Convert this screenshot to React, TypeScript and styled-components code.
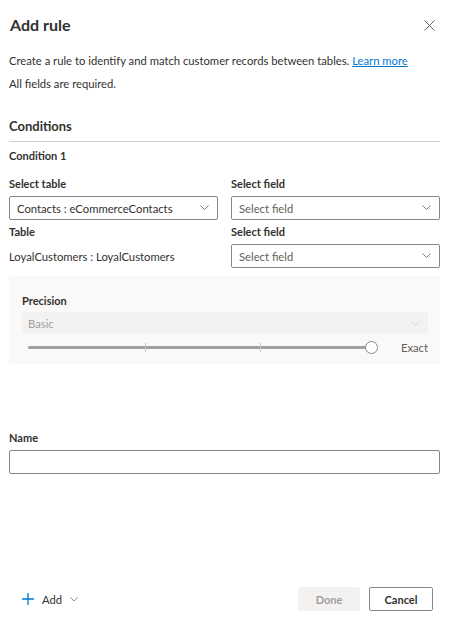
import React from "react";
import styled, { createGlobalStyle } from "styled-components";

const GlobalStyle = createGlobalStyle`
  html, body {
    margin: 0;
    padding: 0;
    background: #fff;
  }
  body {
    font-family: "Lato", "Open Sans", "Liberation Sans", sans-serif;
    color: #323130;
  }
`;

const Panel = styled.div`
  width: 450px;
  height: 622px;
  display: flex;
  flex-direction: column;
  box-sizing: border-box;
  padding: 0 10px 11px 9px;
`;

const Header = styled.div`
  display: flex;
  justify-content: space-between;
  align-items: center;
  height: 24px;
  margin-top: 13px;
`;

const Title = styled.h1`
  margin: 0 0 0 1px;
  font-size: 16px;
  font-weight: 700;
  line-height: 24px;
`;

const CloseButton = styled.button`
  border: none;
  background: none;
  padding: 0;
  margin-right: 5px;
  width: 12px;
  height: 12px;
  display: flex;
  align-items: center;
  justify-content: center;
`;

const Text = styled.p<{ $top: number }>`
  margin: ${(p) => p.$top}px 0 0 0;
  font-size: 11.25px;
  line-height: 16px;
`;

const Link = styled.a`
  color: #0078d4;
  text-decoration: underline;
`;

const SectionTitle = styled.h2`
  margin: 25px 0 0 0;
  font-size: 13px;
  font-weight: 700;
  line-height: 18px;
`;

const Divider = styled.hr`
  margin: 6px 0 0 0;
  border: none;
  border-top: 1px solid #d2d0ce;
`;

const SubTitle = styled.h3`
  margin: 6px 0 0 0;
  font-size: 11px;
  font-weight: 700;
  line-height: 16px;
`;

const FieldGrid = styled.div`
  display: grid;
  grid-template-columns: 1fr 1fr;
  column-gap: 13px;
  margin-top: 12px;
`;

const Field = styled.div<{ $top?: number }>`
  display: flex;
  flex-direction: column;
  gap: 4px;
  margin-top: ${(p) => p.$top ?? 0}px;
`;

const Label = styled.label`
  font-size: 11px;
  font-weight: 700;
  line-height: 16px;
`;

const Select = styled.div<{ $placeholder?: boolean; $disabled?: boolean }>`
  height: 24px;
  box-sizing: border-box;
  display: flex;
  align-items: center;
  justify-content: space-between;
  padding: 0 8px 0 7px;
  border: ${(p) => (p.$disabled ? "none" : "1px solid #8a8886")};
  border-radius: 2px;
  background: ${(p) => (p.$disabled ? "#f3f2f1" : "#fff")};
  font-size: 11.25px;
  color: ${(p) => (p.$disabled ? "#a19f9d" : p.$placeholder ? "#605e5c" : "#323130")};
  padding-left: ${(p) => (p.$disabled ? 6 : 7)}px;
`;

const StaticValue = styled.div`
  height: 24px;
  display: flex;
  align-items: center;
  font-size: 11.25px;
`;

const PrecisionBox = styled.div`
  margin-top: 8px;
  background: #faf9f8;
  padding: 17px 12px 6px 13px;
  height: 88px;
  box-sizing: border-box;
  display: flex;
  flex-direction: column;
  gap: 3px;
`;

const SliderRow = styled.div`
  display: flex;
  align-items: center;
  height: 22px;
  gap: 29px;
  padding-left: 6px;
`;

const Track = styled.div`
  position: relative;
  flex: 1;
  height: 3px;
  background: #a19f9d;
  border-radius: 2px;
`;

const Tick = styled.span`
  position: absolute;
  top: -3px;
  width: 1px;
  height: 9px;
  background: #c8c6c4;
`;

const Thumb = styled.span`
  position: absolute;
  right: -6px;
  top: -5px;
  width: 11px;
  height: 11px;
  border-radius: 50%;
  border: 1px solid #8a8886;
  background: #fff;
`;

const SliderValue = styled.span`
  font-size: 11.25px;
  color: #605e5c;
`;

const NameField = styled(Field)`
  margin-top: 66px;
`;

const Input = styled.input`
  height: 24px;
  box-sizing: border-box;
  border: 1px solid #8a8886;
  border-radius: 2px;
  font-family: inherit;
  font-size: 11px;
  padding: 0 7px;
`;

const Footer = styled.div`
  margin-top: auto;
  display: flex;
  align-items: center;
  justify-content: space-between;
  padding-left: 13px;
  padding-right: 7px;
`;

const AddButton = styled.button`
  border: none;
  background: none;
  padding: 0;
  display: flex;
  align-items: center;
  gap: 8px;
  font-family: inherit;
  font-size: 11.25px;
  color: #323130;
`;

const Actions = styled.div`
  display: flex;
  gap: 9px;
`;

const Button = styled.button<{ $disabled?: boolean }>`
  height: 24px;
  box-sizing: border-box;
  border-radius: 2px;
  font-family: inherit;
  font-size: 11px;
  font-weight: 700;
  border: ${(p) => (p.$disabled ? "none" : "1px solid #8a8886")};
  background: ${(p) => (p.$disabled ? "#f3f2f1" : "#fff")};
  color: ${(p) => (p.$disabled ? "#a19f9d" : "#323130")};
  width: ${(p) => (p.$disabled ? 62 : 64)}px;
`;

const Chevron = ({ color = "#605e5c", size = 9 }: { color?: string; size?: number }) => (
  <svg width={size} height={size * 0.6} viewBox="0 0 10 6" fill="none">
    <path d="M0.5 0.5 L5 5 L9.5 0.5" stroke={color} strokeWidth="0.9" />
  </svg>
);

const App: React.FC = () => (
  <>
    <GlobalStyle />
    <Panel>
      <Header>
        <Title>Add rule</Title>
        <CloseButton aria-label="Close">
          <svg width="11" height="11" viewBox="0 0 11 11">
            <path d="M0.5 0.5 L10.5 10.5 M10.5 0.5 L0.5 10.5" stroke="#605e5c" strokeWidth="1" />
          </svg>
        </CloseButton>
      </Header>
      <Text $top={16}>
        Create a rule to identify and match customer records between tables.{" "}
        <Link href="#">Learn more</Link>
      </Text>
      <Text $top={7}>All fields are required.</Text>

      <SectionTitle>Conditions</SectionTitle>
      <Divider />
      <SubTitle>Condition 1</SubTitle>

      <FieldGrid>
        <Field>
          <Label>Select table</Label>
          <Select>
            Contacts : eCommerceContacts
            <Chevron />
          </Select>
        </Field>
        <Field>
          <Label>Select field</Label>
          <Select $placeholder>
            Select field
            <Chevron />
          </Select>
        </Field>
        <Field $top={4}>
          <Label>Table</Label>
          <StaticValue>LoyalCustomers : LoyalCustomers</StaticValue>
        </Field>
        <Field $top={4}>
          <Label>Select field</Label>
          <Select $placeholder>
            Select field
            <Chevron />
          </Select>
        </Field>
      </FieldGrid>

      <PrecisionBox>
        <Label>Precision</Label>
        <Select $disabled>
          Basic
          <Chevron color="#c8c6c4" />
        </Select>
        <SliderRow>
          <Track>
            <Tick style={{ left: "34%" }} />
            <Tick style={{ left: "67.5%" }} />
            <Thumb />
          </Track>
          <SliderValue>Exact</SliderValue>
        </SliderRow>
      </PrecisionBox>

      <NameField>
        <Label>Name</Label>
        <Input />
      </NameField>

      <Footer>
        <AddButton>
          <svg width="12" height="12" viewBox="0 0 12 12">
            <path d="M6 0 V12 M0 6 H12" stroke="#0078d4" strokeWidth="1.3" />
          </svg>
          Add
          <Chevron size={8} />
        </AddButton>
        <Actions>
          <Button $disabled>Done</Button>
          <Button>Cancel</Button>
        </Actions>
      </Footer>
    </Panel>
  </>
);

export default App;
